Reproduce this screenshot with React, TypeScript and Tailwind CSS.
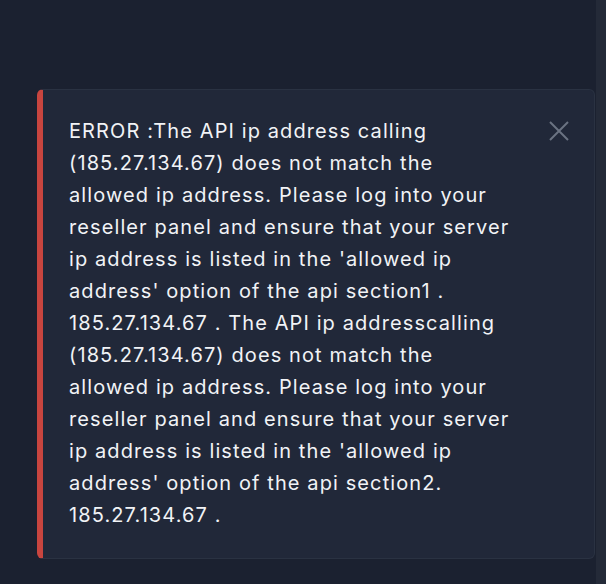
const message =
  "ERROR :The API ip address calling (185.27.134.67) does not match the allowed ip address. Please log into your reseller panel and ensure that your server ip address is listed in the 'allowed ip address' option of the api section1 . 185.27.134.67 . The API ip addresscalling (185.27.134.67) does not match the allowed ip address. Please log into your reseller panel and ensure that your server ip address is listed in the 'allowed ip address' option of the api section2. 185.27.134.67 .";

export default function App() {
  return (
    <div className="flex h-[584px] w-[606px] bg-[#1b2130]" style={{ fontFamily: "Inter, 'Noto Sans', sans-serif" }}>
      <div className="flex-1 pl-[37px] pr-px pt-[89px]">
        {/* Error alert */}
        <div className="flex rounded-md border border-[#2a3242] border-l-[6px] border-l-[#c8453f] bg-[#212839] pt-[25px] pb-[27px] pl-[26px] pr-[25px]">
          <p className="flex-1 text-[20px] leading-8 tracking-[1.1px] text-[#f1f3f6]">{message}</p>
          <button className="ml-[38px] mt-[6px] h-5 w-5 shrink-0 text-[#6b7382]">
            <svg width="20" height="20" viewBox="0 0 20 20" fill="none" stroke="currentColor" strokeWidth="2">
              <path d="M1 1L19 19M19 1L1 19" />
            </svg>
          </button>
        </div>
      </div>
      {/* scrollbar track */}
      <div className="w-[10px] bg-[#242a38]" />
    </div>
  );
}
